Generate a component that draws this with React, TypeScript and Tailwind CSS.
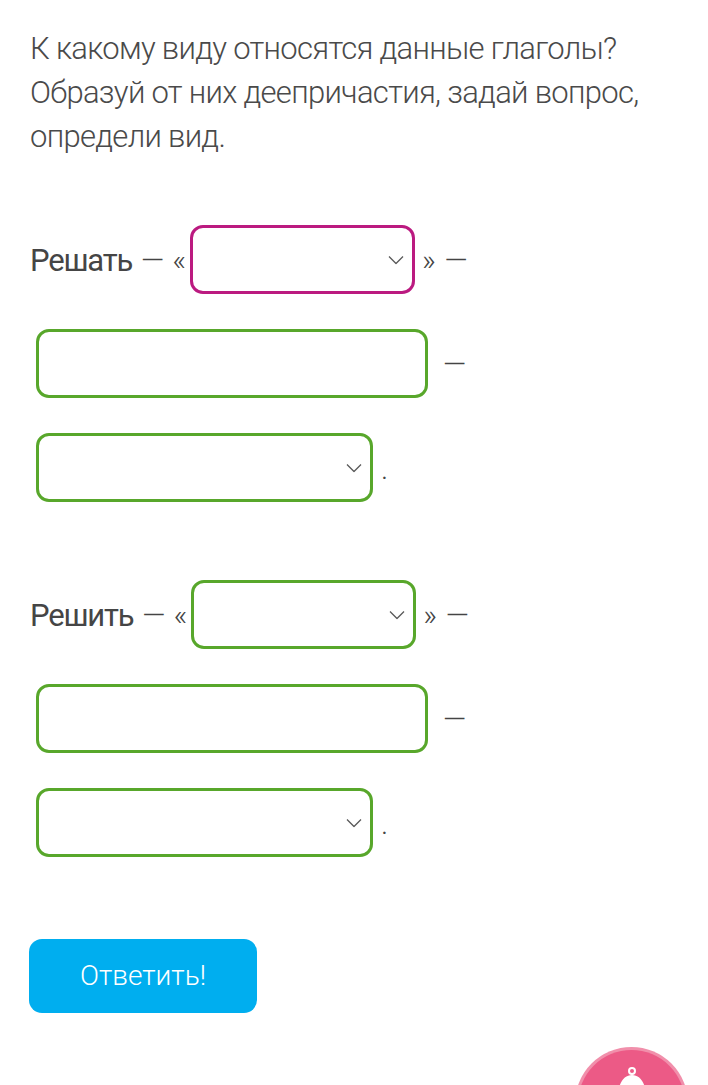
import React from "react";

const Chevron = () => (
  <svg width="16" height="9" viewBox="0 0 16 9" fill="none" className="absolute right-[8px] top-1/2 -translate-y-1/2">
    <path d="M1 1l7 7 7-7" stroke="#5a5a5a" strokeWidth="1.3" />
  </svg>
);

function SelectBox({ w, border }: { w: string; border: string }) {
  return <div className={`relative h-[69px] ${w} ${border} border-[3px] rounded-[13px] bg-white shrink-0`}><Chevron /></div>;
}

function InputBox() {
  return <div className="h-[69px] w-[392px] border-[3px] border-[#58a72b] rounded-[13px] bg-white shrink-0" />;
}

const dash = "text-[30px] font-light text-[#444]";

function Group({ label, first }: { label: string; first: string }) {
  return (
    <div className="flex flex-col gap-[35px]">
      <div className="flex items-center h-[69px]">
        <span className="text-[31px] font-normal tracking-[-1.2px] text-[#454545] leading-none mt-[2px]">{label}</span>
        <span className={`${dash} ml-[9px]`}>—</span>
        <span className={`${dash} ml-[8px]`}>«</span>
        <div className="ml-[4px]"><SelectBox w="w-[225px]" border={first} /></div>
        <span className={`${dash} ml-[7px]`}>»</span>
        <span className={`${dash} ml-[9px]`}>—</span>
      </div>
      <div className="flex items-center h-[69px] pl-[6px]">
        <InputBox />
        <span className={`${dash} ml-[15px]`}>—</span>
      </div>
      <div className="flex items-end h-[69px] pl-[6px]">
        <SelectBox w="w-[337px]" border="border-[#58a72b]" />
        <span className={`${dash} ml-[8px] mb-[11px]`}>.</span>
      </div>
    </div>
  );
}

export default function App() {
  return (
    <div className="relative h-[1085px] overflow-hidden bg-white font-['Roboto',sans-serif]">
      <div className="px-[30px] pt-[27px]">
        <p className="text-[31px] font-light tracking-[-0.7px] leading-[44px] text-[#4a4a4a]">
          К какому виду относятся данные глаголы?
          <br />
          Образуй от них деепричастия, задай вопрос,
          <br />
          определи вид.
        </p>

        <div className="mt-[66px]">
          <Group label="Решать" first="border-[#bb1a80]" />
        </div>
        <div className="mt-[78px]">
          <Group label="Решить" first="border-[#58a72b]" />
        </div>

        <button className="mt-[82px] -ml-[1px] w-[228px] h-[74px] rounded-[13px] bg-[#00aeef] text-white text-[28px] font-light">
          Ответить!
        </button>
      </div>

      {/* floating bell */}
      <div className="absolute left-[575px] top-[1047px] w-[113px] h-[113px] rounded-full bg-[#f18fab] p-[3px]">
        <div className="w-full h-full rounded-full bg-[#ec5a86] flex justify-center pt-[17px]">
          <svg width="40" height="30" viewBox="0 0 40 30">
            <circle cx="20" cy="4" r="3" fill="none" stroke="#fff" strokeWidth="2" />
            <path d="M6 30 C6 16 12 8 20 8 C28 8 34 16 34 30 Z" fill="#fff" />
          </svg>
        </div>
      </div>
    </div>
  );
}
